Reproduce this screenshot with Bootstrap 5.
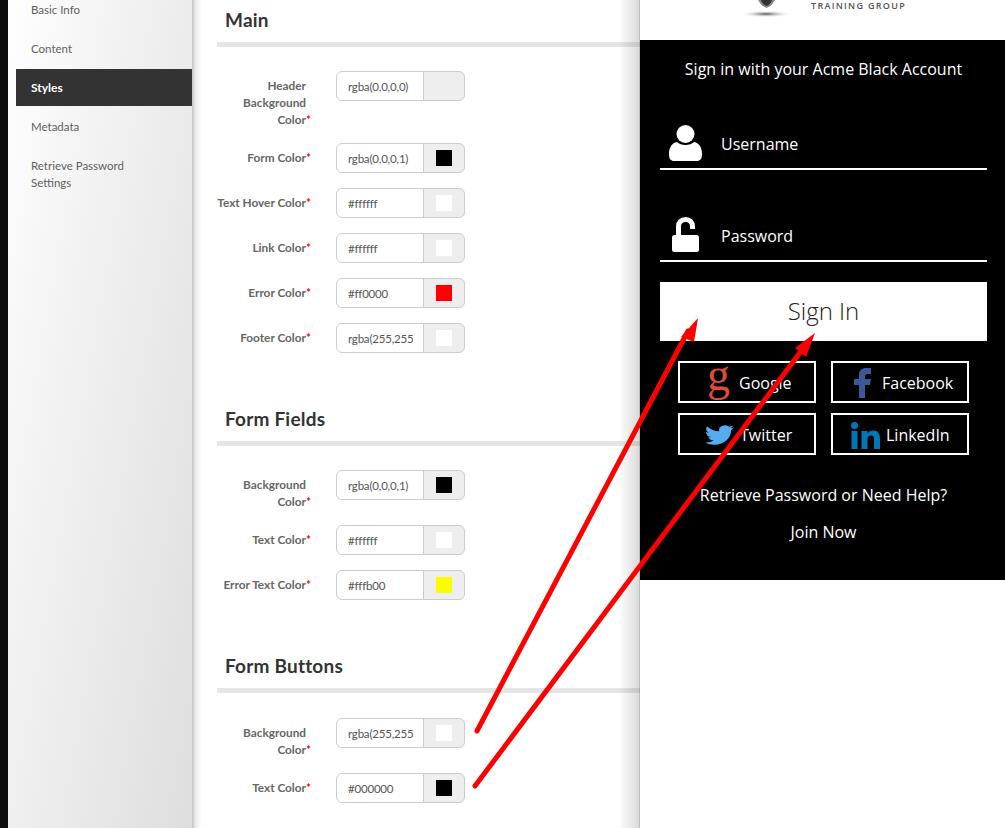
<!DOCTYPE html>
<html lang="en">
<head>
<meta charset="utf-8">
<title>Form styles</title>
<link rel="stylesheet" href="https://cdn.jsdelivr.net/npm/bootstrap@5.3.0/dist/css/bootstrap.min.css">
<style>
html,body{height:100%;overflow:hidden;background:#fff}
.app-shell{height:828px;position:relative;overflow:hidden;font-family:"Lato","Liberation Sans",sans-serif}
.rail{width:8px;background:#0d0d0d}
.side{width:184px;padding:1px 0 0 8px;background:linear-gradient(100deg,#fff 0%,#f4f4f4 30%,#dedede 100%);font-size:11.500px;line-height:17px}
.side-link{display:block;padding:10px 50px 10px 15px;margin-bottom:2px;color:#5f5f5f;text-decoration:none}
.side-link:first-child{padding-top:0}
.side-link.on{background:#333;color:#fff;font-weight:700;font-size:12px}
.main-col{width:448px;padding:10px 0 0 25px;background:linear-gradient(90deg,#c4c4c4 0,#eee 4px,#fff 10px);position:relative;flex:none}
.main-col::after{content:"";position:absolute;top:0;bottom:0;right:0;width:22px;background:linear-gradient(90deg,rgba(0,0,0,0),rgba(0,0,0,.14) 95%,rgba(0,0,0,.35))}
.sec-title{font-size:19px;letter-spacing:.2px;line-height:20px;font-weight:700;color:#333;margin:0;padding:0 0 12px 8px;border-bottom:5px solid #e5e5e5}
.sec{margin-bottom:56px}
.sec-body{padding-top:24px}
.sec:last-child .sec-body{padding-top:25px}
.frow{display:flex;margin-bottom:15px}
.flabel{width:98px;margin-left:-4px;flex:none;padding:6px 5px 0 0;text-align:right;font-size:11.800px;line-height:17px;font-weight:700;color:#666}
.req{color:#f00;margin-right:-5px}
.pick{width:130px;margin-left:25px;height:30px;flex-wrap:nowrap}
.pick .form-control{width:88px;flex:none;height:30px;padding:4px 9px 4px 11px;font-size:11.500px;letter-spacing:-.2px;color:#555;border-color:#ccc;font-family:"Lato","Liberation Sans",sans-serif}
.pick .input-group-text{width:42px;padding:0;justify-content:center;background:#eee;border-color:#ccc}
.swatch{width:16px;height:16px;display:block}
.sw-red{background:#f00}
.sw-yel{background:#fffb00}
.preview{width:365px;flex:none;font-family:"Open Sans","Liberation Sans",sans-serif}
.logo-top{height:40px;position:relative;overflow:hidden}
.logo-txt{position:absolute;left:171px;top:1px;font-size:9px;line-height:10px;letter-spacing:1.300px;font-weight:600;color:#555;white-space:nowrap}
.logo-mark{position:absolute;left:100px;top:0}
.dark{height:540px;background:#000;color:#fff;padding:0 18px 0 20px}
.dark-title{font-size:16px;line-height:22px;padding-top:18px;text-align:center;margin:0}
.fld{height:52px;display:flex;align-items:center;border-bottom:2px solid #fff;font-size:16px}
.fld-user{margin-top:38px;padding-top:2px}
.fld-pass{margin-top:40px;padding-top:2px}
.fld-ico{width:61px;padding-left:9px;flex:none;display:flex;margin-top:-2px}
.fld-pass .fld-ico{margin-top:-4px}
.signin{display:block;width:100%;height:59px;margin-top:20px;padding:0 0 2px;background:#fff;color:#222;font-size:24px;font-weight:300;border:0;border-radius:0}
.soc-grid{display:grid;grid-template-columns:138px 138px;gap:10px 15px;margin:20px 0 0 18px}
.soc{height:42px;border:2px solid #fff;border-radius:0;color:#fff;font-size:16px;display:flex;align-items:center;background:#000;padding:2px 0 0;text-decoration:none}
.gl{padding-left:27px}.fb{padding-left:21px}.tw{padding-left:25px}.li{padding-left:18px}
.g-glyph{font-family:"Liberation Serif",serif;font-size:46px;line-height:36px;color:#dd4b39;margin-right:9px;height:40px;margin-top:-12px}
.fb-ico{margin-right:10px}
.soc-ico{margin-right:6px}
.dark-link{display:block;text-align:center;color:#fff;text-decoration:none;font-size:16px;line-height:22px}
.help-link{margin-top:29px}
.join-link{margin-top:15px}
.arrows{position:absolute;left:0;top:0;pointer-events:none}
</style>
</head>
<body>
<div class="app-shell d-flex">
  <div class="rail"></div>
  <nav class="side flex-shrink-0">
    <a class="side-link" href="#">Basic Info</a>
    <a class="side-link" href="#">Content</a>
    <a class="side-link on" href="#">Styles</a>
    <a class="side-link" href="#">Metadata</a>
    <a class="side-link" href="#">Retrieve Password Settings</a>
  </nav>
  <main class="main-col">
    <section class="sec">
      <h2 class="sec-title">Main</h2>
      <div class="sec-body">
        <div class="frow"><label class="flabel">Header Background Color<span class="req">*</span></label><div class="input-group pick"><input class="form-control" value="rgba(0,0,0,0)"><span class="input-group-text"></span></div></div>
        <div class="frow"><label class="flabel">Form Color<span class="req">*</span></label><div class="input-group pick"><input class="form-control" value="rgba(0,0,0,1)"><span class="input-group-text"><i class="swatch bg-black"></i></span></div></div>
        <div class="frow"><label class="flabel text-nowrap">Text Hover Color<span class="req">*</span></label><div class="input-group pick"><input class="form-control" value="#ffffff"><span class="input-group-text"><i class="swatch bg-white"></i></span></div></div>
        <div class="frow"><label class="flabel">Link Color<span class="req">*</span></label><div class="input-group pick"><input class="form-control" value="#ffffff"><span class="input-group-text"><i class="swatch bg-white"></i></span></div></div>
        <div class="frow"><label class="flabel">Error Color<span class="req">*</span></label><div class="input-group pick"><input class="form-control" value="#ff0000"><span class="input-group-text"><i class="swatch sw-red"></i></span></div></div>
        <div class="frow"><label class="flabel">Footer Color<span class="req">*</span></label><div class="input-group pick"><input class="form-control" value="rgba(255,255,255,1)"><span class="input-group-text"><i class="swatch bg-white"></i></span></div></div>
      </div>
    </section>
    <section class="sec">
      <h2 class="sec-title">Form Fields</h2>
      <div class="sec-body">
        <div class="frow"><label class="flabel">Background Color<span class="req">*</span></label><div class="input-group pick"><input class="form-control" value="rgba(0,0,0,1)"><span class="input-group-text"><i class="swatch bg-black"></i></span></div></div>
        <div class="frow"><label class="flabel">Text Color<span class="req">*</span></label><div class="input-group pick"><input class="form-control" value="#ffffff"><span class="input-group-text"><i class="swatch bg-white"></i></span></div></div>
        <div class="frow"><label class="flabel">Error Text Color<span class="req">*</span></label><div class="input-group pick"><input class="form-control" value="#fffb00"><span class="input-group-text"><i class="swatch sw-yel"></i></span></div></div>
      </div>
    </section>
    <section class="sec">
      <h2 class="sec-title">Form Buttons</h2>
      <div class="sec-body">
        <div class="frow"><label class="flabel">Background Color<span class="req">*</span></label><div class="input-group pick"><input class="form-control" value="rgba(255,255,255,1)"><span class="input-group-text"><i class="swatch bg-white"></i></span></div></div>
        <div class="frow"><label class="flabel">Text Color<span class="req">*</span></label><div class="input-group pick"><input class="form-control" value="#000000"><span class="input-group-text"><i class="swatch bg-black"></i></span></div></div>
      </div>
    </section>
  </main>
  <aside class="preview">
    <div class="logo-top">
      <svg class="logo-mark" width="60" height="22" viewBox="0 0 60 22"><defs><radialGradient id="sh"><stop offset="0" stop-color="#555"/><stop offset="1" stop-color="#fff" stop-opacity="0"/></radialGradient></defs><ellipse cx="26" cy="14" rx="26" ry="3.500" fill="url(#sh)"/><path d="M18 0h17l-2 3c-1 2-4 4-6.500 5-2.500-1-5.500-3-6.500-5z" fill="#8a8a8a"/><path d="M21 0h11l-1 2.500c-1 1.500-3 3-4.500 3.500-1.500-.5-3.500-2-4.500-3.500z" fill="#333"/></svg>
      <div class="logo-txt">TRAINING GROUP</div>
    </div>
    <div class="dark">
      <p class="dark-title">Sign in with your Acme Black Account</p>
      <div class="fld fld-user"><span class="fld-ico"><svg width="33" height="36" viewBox="0 0 33 36"><circle cx="16.500" cy="9" r="9" fill="#fff"/><path d="M0 29c0-7 3-11 8-12 2 2 5 3 8.500 3s6.500-1 8.500-3c5 1 8 5 8 12 0 5-2 7-5 7H5c-3 0-5-2-5-7z" fill="#fff"/></svg></span>Username</div>
      <div class="fld fld-pass"><span class="fld-ico"><svg width="33" height="36" viewBox="0 0 33 36"><path d="M9.500 20V10.500c0-4.500 3-7 7-7s7 2.500 7 7v2.500" fill="none" stroke="#fff" stroke-width="5"/><rect x="3" y="19" width="27" height="17" rx="2.500" fill="#fff"/></svg></span>Password</div>
      <button class="btn signin" type="button">Sign In</button>
      <div class="soc-grid">
        <a class="soc gl" href="#"><span class="g-glyph">g</span>Google</a>
        <a class="soc fb" href="#"><svg class="fb-ico" width="18" height="30" viewBox="0 0 18 30"><path d="M5 30V17H0v-6h5V7c0-5 3-7 7-7h5v6h-3c-2 0-3 1-3 3v2h6l-1 6h-5v13z" fill="#3b5998"/></svg>Facebook</a>
        <a class="soc tw" href="#"><svg class="soc-ico" width="29" height="24" viewBox="0 0 24 24" preserveAspectRatio="none"><path d="M23.953 4.570a10 10 0 01-2.825.775 4.958 4.958 0 002.163-2.723c-.951.555-2.005.959-3.127 1.184a4.920 4.920 0 00-8.384 4.482C7.690 8.095 4.067 6.130 1.640 3.162a4.822 4.822 0 00-.666 2.475c0 1.710.870 3.213 2.188 4.096a4.904 4.904 0 01-2.228-.616v.060a4.923 4.923 0 003.946 4.827 4.996 4.996 0 01-2.212.085 4.936 4.936 0 004.604 3.417 9.867 9.867 0 01-6.102 2.105c-.390 0-.779-.023-1.170-.067a13.995 13.995 0 007.557 2.209c9.053 0 13.998-7.496 13.998-13.985 0-.210 0-.420-.015-.630A9.935 9.935 0 0024 4.590z" fill="#55acee"/></svg>Twitter</a>
        <a class="soc li" href="#"><svg class="soc-ico" width="29" height="27" viewBox="0 0 29 27"><circle cx="3.500" cy="3.500" r="3.500" fill="#0077b5"/><rect x=".5" y="9" width="6" height="18" fill="#0077b5"/><path d="M10.500 9h6v2.500c1.200-2 3.500-3 6-3 4.500 0 6.500 3 6.500 8V27h-6v-9.500c0-2.500-.8-4-3-4s-3.500 1.500-3.500 4V27h-6z" fill="#0077b5"/></svg>LinkedIn</a>
      </div>
      <a class="dark-link help-link" href="#">Retrieve Password or Need Help?</a>
      <a class="dark-link join-link" href="#">Join Now</a>
    </div>
  </aside>
  <svg class="arrows" width="1005" height="828" viewBox="0 0 1005 828" aria-hidden="true">
    <g stroke="#f00" stroke-width="5" stroke-linecap="round" fill="none"><path d="M477 731 688 331"/><path d="M475 786 802 350"/></g>
    <path d="M698 318 694 342 681 337zM815 333 806 357 795 348z" fill="#f00"/>
  </svg>
</div>
<script src="https://cdn.jsdelivr.net/npm/bootstrap@5.3.0/dist/js/bootstrap.bundle.min.js"></script>
</body>
</html>
